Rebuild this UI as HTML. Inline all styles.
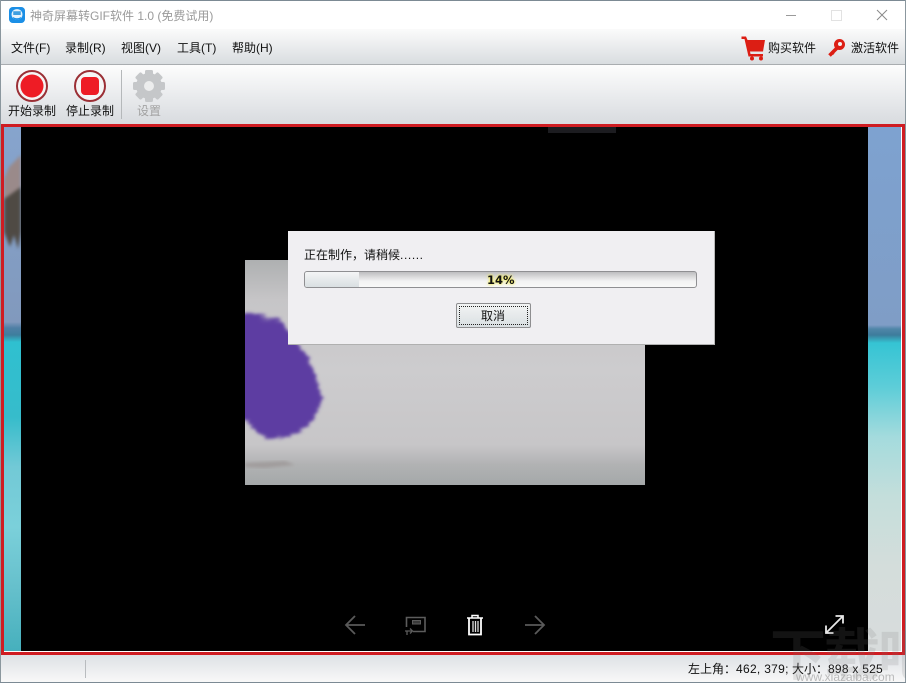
<!DOCTYPE html>
<html><head><meta charset="utf-8"><style>
html,body{margin:0;padding:0;background:#fff}
#w{position:relative;width:906px;height:683px;overflow:hidden;background:#fff;font-family:"Liberation Sans","Noto Sans CJK SC",sans-serif;font-size:12px;color:#111}
.a{position:absolute}
.t{position:absolute;white-space:nowrap;line-height:16px}
</style></head><body><div id="w">
<!-- chrome -->
<div class="a" style="left:0;top:29px;width:906px;height:36px;background:linear-gradient(#fbfbfb,#d9dde0);border-bottom:1px solid #a9adb0;box-sizing:border-box"></div>
<div class="a" style="left:0;top:65px;width:906px;height:59px;background:linear-gradient(#fdfdfd,#d8dbdf)"></div>
<div class="a" style="left:0;top:0;width:906px;height:1px;background:#7c8a94"></div>
<div class="a" style="left:0;top:0;width:1px;height:683px;background:#8b979e"></div>
<div class="a" style="left:905px;top:0;width:1px;height:683px;background:#8b979e"></div>
<!-- title -->
<svg class="a" style="left:9px;top:7px" width="16" height="16" viewBox="0 0 17 17"><rect width="17" height="17" rx="4" fill="#1b8fe6"/><circle cx="8.5" cy="8" r="5.8" fill="#e8f3fb"/><rect x="4.500" y="4.500" width="8" height="4" fill="#3f9fe0"/><path d="M4 10.500q4.500 3 9 0l-1 2.500q-3.500 1.500-7 0z" fill="#1b8fe6"/></svg>
<div class="t" style="left:30px;top:8px;font-size:12px;color:#9a9a9a">神奇屏幕转GIF软件 1.0 (免费试用)</div>
<div class="a" style="left:786px;top:15px;width:10px;height:1px;background:#9a9a9a"></div>
<div class="a" style="left:831px;top:10px;width:9px;height:9px;border:1px solid #e2e2e2"></div>
<svg class="a" style="left:876px;top:9px" width="12" height="12"><path d="M1 1L11 11M11 1L1 11" stroke="#8a8a8a" stroke-width="1" fill="none"/></svg>
<!-- menu -->
<div class="t" style="left:11px;top:40px">文件(F)</div>
<div class="t" style="left:65px;top:40px">录制(R)</div>
<div class="t" style="left:121px;top:40px">视图(V)</div>
<div class="t" style="left:177px;top:40px">工具(T)</div>
<div class="t" style="left:232px;top:40px">帮助(H)</div>
<svg class="a" style="left:741px;top:36px" width="25" height="25" viewBox="0 0 25 25"><path d="M0.500 0.500H5L6.500 4H24L22 15.500H9L9.500 18H22V20.500H7.500L3.500 3H0.500z" fill="#dc1e14"/><circle cx="11" cy="22.500" r="2" fill="#dc1e14"/><circle cx="20" cy="22.500" r="2" fill="#dc1e14"/></svg>
<div class="t" style="left:768px;top:40px">购买软件</div>
<svg class="a" style="left:827px;top:38px" width="18" height="20" viewBox="0 0 18 20"><circle cx="12.500" cy="6.500" r="5.500" fill="#dc1e14"/><path d="M10 10L2.500 17.500" stroke="#dc1e14" stroke-width="3.600" fill="none"/><path d="M5 13L7.500 15.500L6 17L3.500 14.500z" fill="#dc1e14"/><circle cx="13" cy="6" r="2" fill="#f3f3f3"/></svg>
<div class="t" style="left:851px;top:40px">激活软件</div>
<!-- toolbar -->
<svg class="a" style="left:15px;top:69px" width="34" height="34"><circle cx="17" cy="17" r="15" fill="#f5f5f5" stroke="#9b2f35" stroke-width="2"/><circle cx="17" cy="17" r="11.500" fill="#ee1c25"/></svg>
<svg class="a" style="left:73px;top:69px" width="34" height="34"><circle cx="17" cy="17" r="15" fill="#f5f5f5" stroke="#9b2f35" stroke-width="2"/><rect x="8" y="8" width="18" height="18" rx="4" fill="#ee1c25"/></svg>
<div class="t" style="left:8px;top:103px">开始录制</div>
<div class="t" style="left:66px;top:103px">停止录制</div>
<div class="a" style="left:121px;top:70px;width:1px;height:49px;background:#b5b8ba"></div>
<svg class="a" style="left:132px;top:69px" width="34" height="34" viewBox="0 0 34 34"><g fill="#c5c7c9"><circle cx="17" cy="17" r="13"/><rect x="13" y="1" width="8" height="32" rx="1.500"/><rect x="13" y="1" width="8" height="32" rx="1.500" transform="rotate(45 17 17)"/><rect x="13" y="1" width="8" height="32" rx="1.500" transform="rotate(90 17 17)"/><rect x="13" y="1" width="8" height="32" rx="1.500" transform="rotate(135 17 17)"/></g><circle cx="17" cy="17" r="5" fill="#eceded"/></svg>
<div class="t" style="left:137px;top:103px;color:#a2a2a2">设置</div>
<!-- stage -->
<div class="a" style="left:4px;top:127px;width:17px;height:524px;background:linear-gradient(#86a4cd 0,#8199bd 195px,#4f7fa5 201px,#3d7e9d 208px,#2fc0d0 215px,#36bccb 290px,#72c9d6 340px,#7bd0da 400px,#66c0cc 460px,#46b0bd 524px)"></div>
<svg class="a" style="left:4px;top:127px;filter:blur(1.5px)" width="17" height="130"><path d="M17 28L8 38L0 52V105L6 120L10 108L14 122L17 105z" fill="#4f4a44"/><path d="M17 28L5 40L0 52V72L17 60z" fill="#9a8a8a"/></svg>
<div class="a" style="left:868px;top:127px;width:33px;height:524px;background:linear-gradient(#7ea2d0 0,#7f9dc6 198px,#4f86a8 202px,#3d7c9c 208px,#35c4d4 216px,#5dcdd8 260px,#a4dbdd 310px,#c4dedb 370px,#d4dddb 440px,#d8dcdc 524px)"></div>
<div class="a" style="left:21px;top:127px;width:847px;height:524px;background:#000"></div>
<div class="a" style="left:548px;top:127px;width:68px;height:6px;background:#1c1c20"></div>
<!-- preview -->
<div class="a" style="left:245px;top:260px;width:400px;height:225px;overflow:hidden;background:linear-gradient(#aeb0b1 0,#c6c5c7 40px,#cdccce 110px,#c9c8ca 160px,#c7c6c8 185px,#b1b2b3 205px,#a4a8a9 225px)">
<svg width="400" height="225" style="position:absolute;left:0;top:0"><defs><filter id="b" x="-20%" y="-20%" width="140%" height="140%"><feTurbulence type="fractalNoise" baseFrequency="0.04 0.3" numOctaves="3" seed="4" result="n"/><feDisplacementMap in="SourceGraphic" in2="n" scale="10" xChannelSelector="R" yChannelSelector="G"/><feGaussianBlur stdDeviation="1.600"/></filter><filter id="c"><feGaussianBlur stdDeviation="1.500"/></filter></defs><path d="M-10 53L35 60L55 85L70 115L78 140L65 165L45 177L20 178L0 160H-10z" fill="#5d3ca2" filter="url(#b)"/><path d="M0 203L40 201L50 205L20 208L0 207z" fill="#a09c9c" filter="url(#c)"/></svg>
</div>
<!-- dialog -->
<div class="a" style="left:288px;top:231px;width:427px;height:114px;box-sizing:border-box;background:#f0eff2;border-right:1px solid #b8b8b8;border-bottom:1px solid #b0b0b0"></div>
<div class="t" style="left:304px;top:247px;color:#111">正在制作，请稍候<span style="letter-spacing:.6px">......</span></div>
<div class="a" style="left:304px;top:271px;width:393px;height:17px;box-sizing:border-box;border:1px solid #8f8f92;border-radius:3px;background:linear-gradient(#bdbdbf,#f2f2f3 60%,#f8f8f8);overflow:hidden"><div style="width:54px;height:15px;background:linear-gradient(#f4f5f6,#d9dfe2)"></div></div>
<div class="t" style="left:487px;top:272px;font:bold 11.5px/16px 'DejaVu Sans',sans-serif;color:#111;text-shadow:0 0 3px #f5ee50,0 0 2px #f5ee50">14%</div>
<div class="a" style="left:456px;top:303px;width:75px;height:25px;box-sizing:border-box;border:1px solid #8e8e90;border-radius:2px;background:linear-gradient(#f3f4f4,#d9dfe2)"><div style="position:absolute;left:2px;top:2px;right:2px;bottom:2px;border:1px dotted #222"></div></div>
<div class="t" style="left:481px;top:308px">取消</div>
<!-- controls -->
<svg class="a" style="left:344px;top:614px" width="22" height="22"><path d="M21 11H2M11 2L2 11L11 20" stroke="#5a5a5a" stroke-width="1.800" fill="none"/></svg>
<svg class="a" style="left:404px;top:616px" width="22" height="20"><path d="M2.500 11V1.500H21V15.500H9" stroke="#5c5c5c" stroke-width="1.600" fill="none"/><rect x="8.500" y="4.500" width="8" height="3.500" stroke="#5c5c5c" fill="#3a3a3a"/><path d="M1 15H8M6 12.500L8.500 15L6 17.500M3 15V19" stroke="#5c5c5c" stroke-width="1.300" fill="none"/></svg>
<svg class="a" style="left:465px;top:614px" width="20" height="22"><path d="M2 4H18M7 4V1.500H13V4" stroke="#fff" stroke-width="1.500" fill="none"/><path d="M4 4.500V20.500H16V4.500" stroke="#fff" stroke-width="1.800" fill="none"/><path d="M8 7V18M10.500 7V18M13 7V18" stroke="#ddd" stroke-width="1.300"/></svg>
<svg class="a" style="left:524px;top:614px" width="22" height="22"><path d="M1 11H20M11 2L20 11L11 20" stroke="#5a5a5a" stroke-width="1.800" fill="none"/></svg>
<svg class="a" style="left:824px;top:614px" width="21" height="21"><path d="M2 19L19 2M11.500 2H19V9.500M2 11.500V19H9.500" stroke="#e8e8e8" stroke-width="1.800" fill="none"/></svg>
<!-- red frame -->
<div class="a" style="left:1px;top:124px;width:904px;height:531px;box-sizing:border-box;border:3px solid #cf1c22"></div>
<!-- status -->
<div class="a" style="left:1px;top:655px;width:904px;height:27px;background:linear-gradient(#dde1e5,#f8f8f8)"></div>
<div class="a" style="left:0;top:682px;width:906px;height:1px;background:#7c8a94"></div>
<div class="a" style="left:85px;top:660px;width:1px;height:18px;background:#b9bcbf"></div>
<div class="t" style="left:688px;top:661px">左上角：</div>
<div class="t" style="left:736px;top:661px;letter-spacing:.3px">462, 379;</div>
<div class="t" style="left:792px;top:661px">大小：</div>
<div class="t" style="left:828px;top:661px;letter-spacing:.25px">898 x 525</div>
<!-- watermark -->
<div class="t" style="left:770px;top:626px;font-size:56px;line-height:60px;color:rgba(120,120,120,.16);font-weight:bold;letter-spacing:-2px">下载吧</div>
<div class="t" style="left:796px;top:671px;font-size:12px;line-height:12px;color:rgba(130,130,130,.5)">www.xiazaiba.com</div>
</div></body></html>
